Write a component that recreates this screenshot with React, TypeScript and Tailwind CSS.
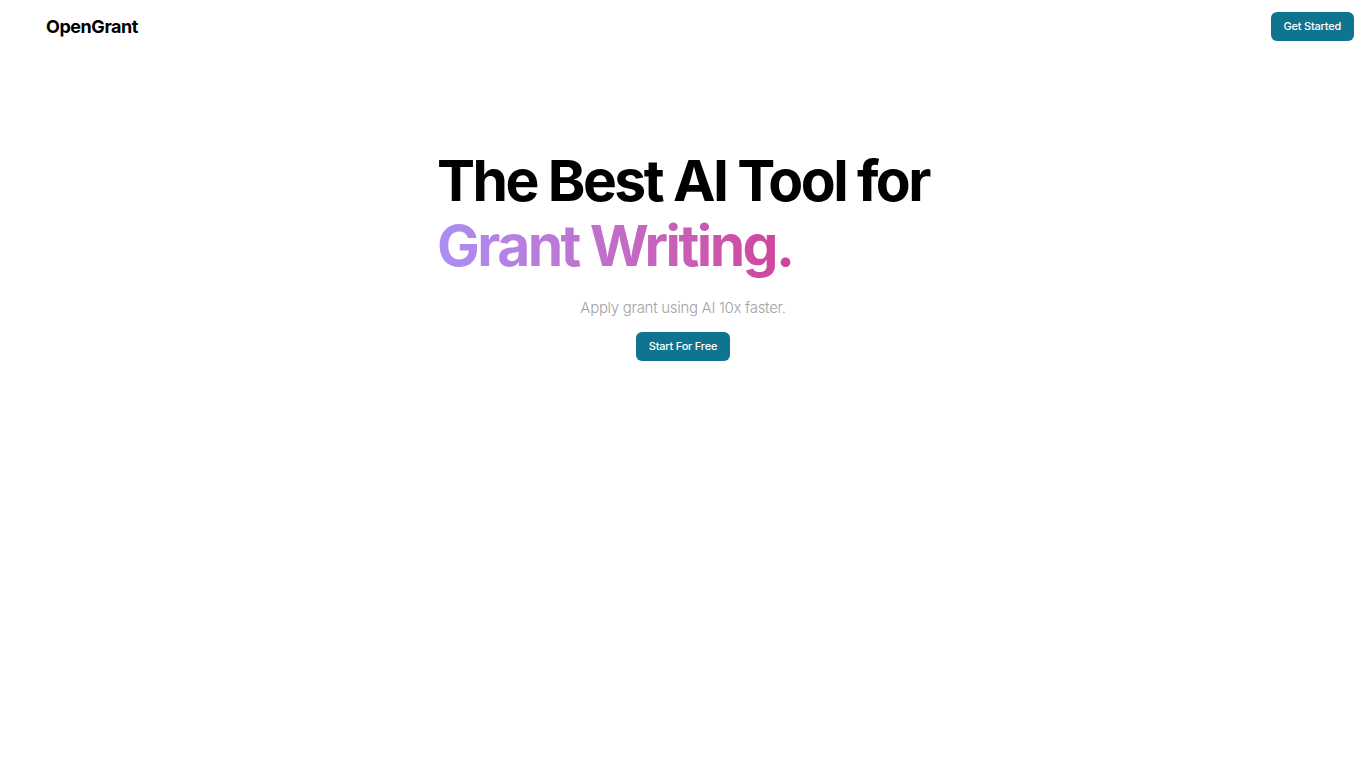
import React from "react";

export default function App() {
  return (
    <div className="min-h-screen w-full bg-white font-['Inter',sans-serif] text-black">
      <header className="flex h-[53px] items-center justify-between pl-[46px] pr-3">
        <span className="text-lg font-bold tracking-tight">OpenGrant</span>
        <button className="h-[29px] rounded-md bg-[#0e7490] px-[13px] text-[11px] font-medium tracking-[-0.02em] text-white">
          Get Started
        </button>
      </header>

      <main className="flex flex-col items-center pt-[95px]">
        <h1 className="text-left text-[57px] font-bold leading-[65px] tracking-[-0.045em]">
          The Best AI Tool for
          <br />
          <span className="bg-gradient-to-r from-[#ab8ef5] to-[#d1409a] bg-clip-text text-transparent">
            Grant Writing.
          </span>
        </h1>
        <p className="mt-[19px] text-[15px] font-light leading-[22px] tracking-[-0.02em] text-[#a3a3a3]">
          Apply grant using AI 10x faster.
        </p>
        <button className="mt-[13px] h-[29px] rounded-md bg-[#0e7490] px-[13px] text-[11px] font-medium tracking-[-0.02em] text-white">
          Start For Free
        </button>
      </main>
    </div>
  );
}
